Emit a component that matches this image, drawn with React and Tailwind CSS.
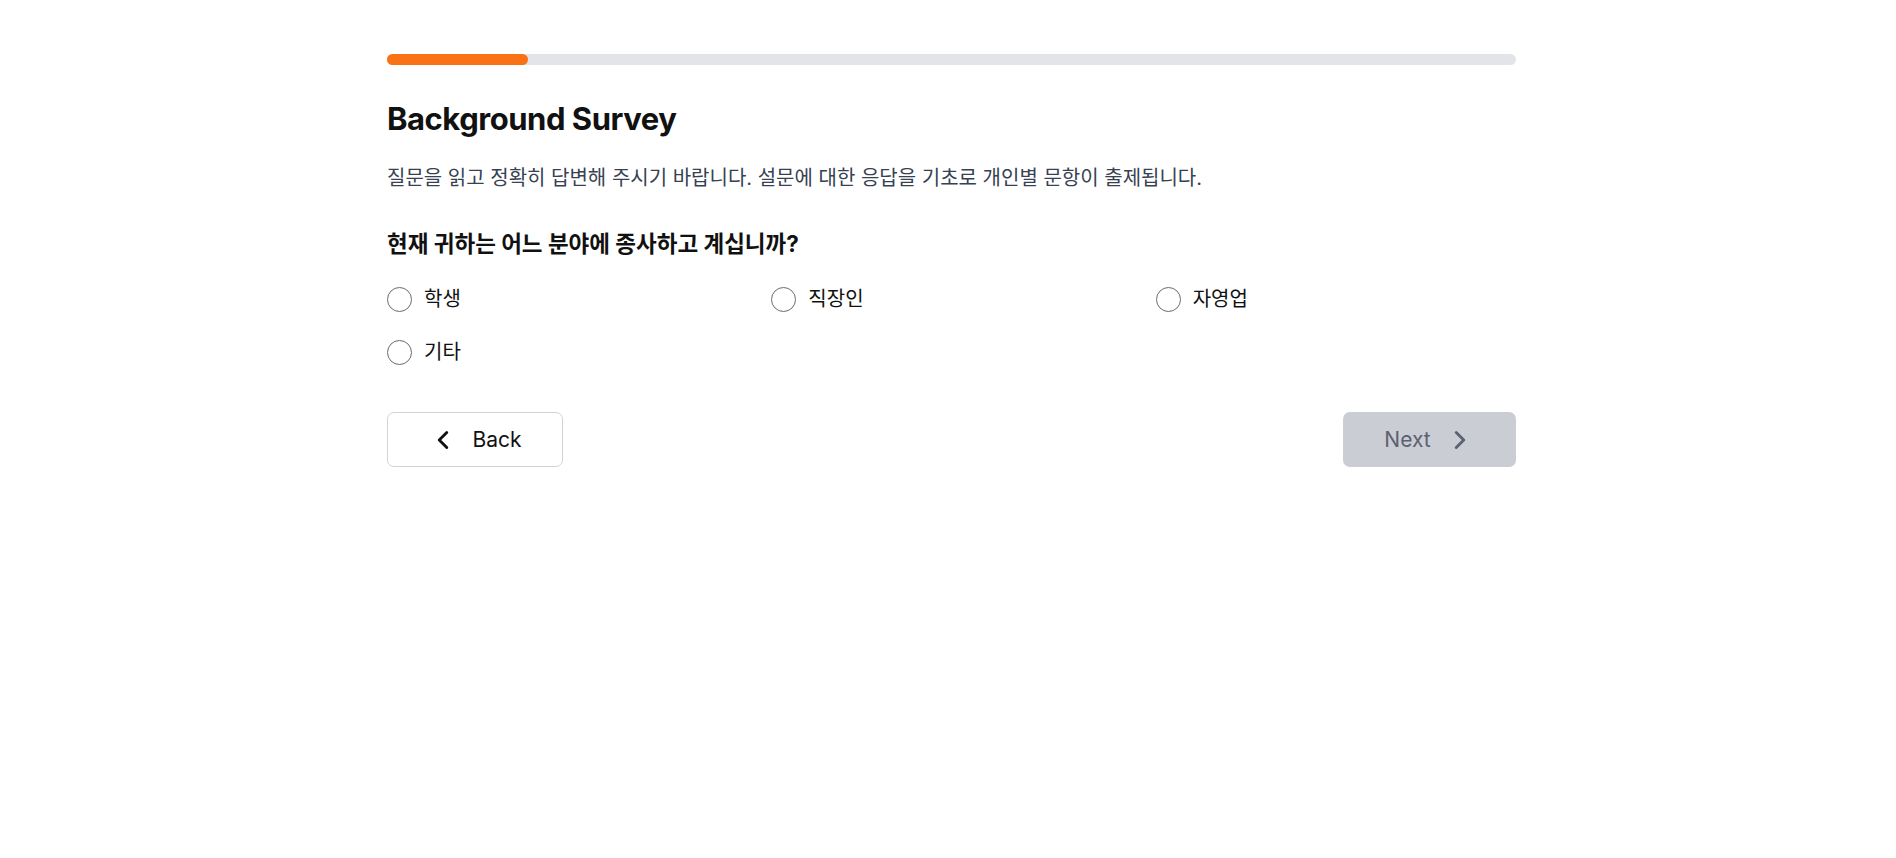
import React, { useState } from "react";
import { ChevronLeft, ChevronRight } from "lucide-react";

const options = ["학생", "직장인", "자영업", "기타"];

export default function App() {
  const [selected, setSelected] = useState(null);

  return (
    <div
      className="min-h-screen bg-white text-[#111111]"
      style={{ fontFamily: 'Inter, "Noto Sans CJK KR", sans-serif' }}
    >
      <div className="mx-auto max-w-[1136px] pl-[7px] pt-[54px]">
        {/* 진행 바 */}
        <div className="h-[11px] w-full rounded-full bg-[#e2e4e9]">
          <div className="h-full w-[12.5%] rounded-full bg-[#f97316]" />
        </div>

        <h1 className="mt-[34px] text-[31px] font-bold leading-[40px] tracking-[-0.015em]">
          Background Survey
        </h1>

        <p className="mt-[24px] text-[20px] leading-[30px] text-[#374151]">
          질문을 읽고 정확히 답변해 주시기 바랍니다. 설문에 대한 응답을 기초로
          개인별 문항이 출제됩니다.
        </p>

        <h2 className="mt-[36px] text-[22.5px] font-bold leading-[30px]">
          현재 귀하는 어느 분야에 종사하고 계십니까?
        </h2>

        <div className="mt-[22px] grid grid-cols-3 gap-x-6 gap-y-[17px]">
          {options.map((opt) => (
            <label
              key={opt}
              className="flex h-[36px] cursor-pointer items-center gap-3"
              onClick={() => setSelected(opt)}
            >
              <span
                className={
                  selected === opt
                    ? "flex h-[25px] w-[25px] items-center justify-center rounded-full border-[1.5px] border-[#f97316]"
                    : "flex h-[25px] w-[25px] items-center justify-center rounded-full border-[1.5px] border-[#6b6b6b]"
                }
              >
                {selected === opt && (
                  <span className="h-[13px] w-[13px] rounded-full bg-[#f97316]" />
                )}
              </span>
              <span className="text-[20px] text-[#111111]">{opt}</span>
            </label>
          ))}
        </div>

        <div className="mt-[42px] flex items-center justify-between">
          <button className="flex h-[55px] w-[176px] items-center justify-center gap-[14px] rounded-[7px] border border-[#d1d3da] bg-white text-[21px] text-[#111111]">
            <ChevronLeft size={30} strokeWidth={2.3} />
            <span>Back</span>
          </button>
          <button
            disabled={!selected}
            className={
              selected
                ? "flex h-[55px] w-[173px] items-center justify-center gap-[14px] rounded-[7px] bg-[#f97316] text-[21px] text-white"
                : "flex h-[55px] w-[173px] items-center justify-center gap-[14px] rounded-[7px] bg-[#cbcdd5] text-[21px] text-[#5b6170]"
            }
          >
            <span>Next</span>
            <ChevronRight size={30} strokeWidth={2.3} />
          </button>
        </div>
      </div>
    </div>
  );
}
